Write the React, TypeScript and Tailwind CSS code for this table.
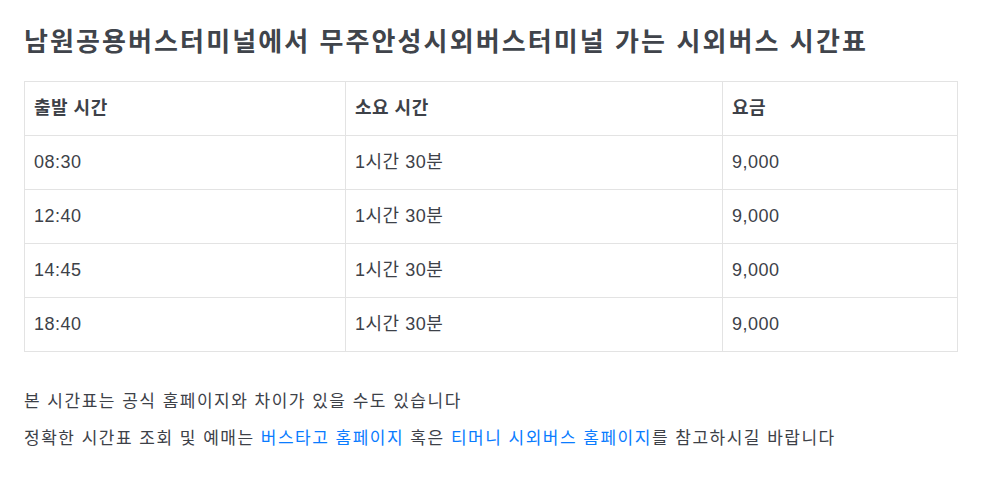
export default function App() {
  const rows = ["08:30", "12:40", "14:45", "18:40"];
  const font = { fontFamily: '"Liberation Sans", "Noto Sans CJK KR", sans-serif' };
  return (
    <div className="w-[983px] h-[481px] bg-white text-[#3d4148] px-[24px] pt-[24px]" style={font}>
      <h1 className="text-[26px] font-bold leading-[36px] text-[#40444b] tracking-[2.1px]">
        남원공용버스터미널에서 무주안성시외버스터미널 가는 시외버스 시간표
      </h1>
      <div className="mt-[21px] w-[934px] border border-[#e3e3e3] text-[18px] tracking-[0.5px]">
        <div className="grid grid-cols-[321px_377px_1fr] h-[53px]">
          <div className="flex items-center pl-[9px] border-r border-[#e3e3e3] font-semibold">출발 시간</div>
          <div className="flex items-center pl-[9px] border-r border-[#e3e3e3] font-semibold">소요 시간</div>
          <div className="flex items-center pl-[9px] font-semibold">요금</div>
        </div>
        {rows.map((t) => (
          <div key={t} className="grid grid-cols-[321px_377px_1fr] h-[54px] border-t border-[#e3e3e3]">
            <div className="flex items-center pl-[9px] border-r border-[#e3e3e3]">{t}</div>
            <div className="flex items-center pl-[9px] border-r border-[#e3e3e3]">1시간 30분</div>
            <div className="flex items-center pl-[9px]">9,000</div>
          </div>
        ))}
      </div>
      <div className="mt-[31px] text-[17px] leading-[37px] tracking-[1.5px]">
        <p>본 시간표는 공식 홈페이지와 차이가 있을 수도 있습니다</p>
        <p>
          정확한 시간표 조회 및 예매는 <span className="text-[#0a7cff]">버스타고 홈페이지</span> 혹은{" "}
          <span className="text-[#0a7cff]">티머니 시외버스 홈페이지</span>를 참고하시길 바랍니다
        </p>
      </div>
    </div>
  );
}
